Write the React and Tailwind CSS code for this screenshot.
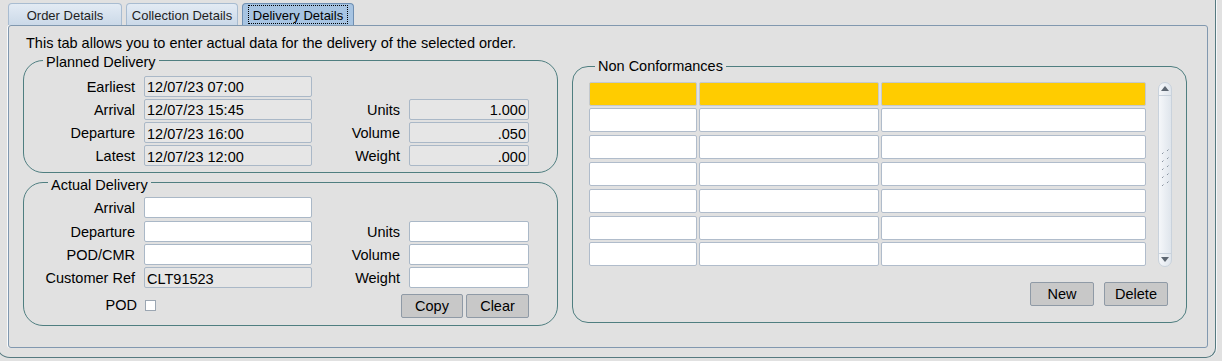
import React from 'react';

/* ── form rows ── */
const plannedLeft = [
  ['Earliest', '12/07/23 07:00'],
  ['Arrival', '12/07/23 15:45'],
  ['Departure', '12/07/23 16:00'],
  ['Latest', '12/07/23 12:00'],
];
const plannedRight = [null, ['Units', '1.000'], ['Volume', '.050'], ['Weight', '.000']];

const actualLeft = [
  ['Arrival', '', false],
  ['Departure', '', false],
  ['POD/CMR', '', false],
  ['Customer Ref', 'CLT91523', true],
];
const actualRight = [null, ['Units', ''], ['Volume', ''], ['Weight', '']];

function Field({ value = '', grey, right, w }) {
  return (
    <input
      readOnly
      value={value}
      className={`h-[21px] ${w} rounded-[2px] border border-[#aab8c7] px-[2px] pt-[2px] text-[14.5px] leading-[17px] text-black outline-none ${grey ? 'bg-[#e6e6e6]' : 'bg-white'} ${right ? 'text-right' : 'text-left'}`}
    />
  );
}

function Row({ left, right, greyRight }) {
  return (
    <div className="flex items-start h-[21px]">
      <span className="w-[111px] mr-[9px] text-right text-[14.5px] leading-[23px] whitespace-nowrap">{left[0]}</span>
      <Field value={left[1]} grey={left[2]} w="w-[168px]" />
      {right ? (
        <>
          <span className="w-[88px] mr-[9px] text-right text-[14.5px] leading-[23px]">{right[0]}</span>
          <Field value={right[1]} grey={greyRight} right w="w-[120px]" />
        </>
      ) : null}
    </div>
  );
}

function Btn({ children, w }) {
  return (
    <button className={`${w} h-[24px] rounded-[2px] border border-[#8f9aa6] bg-[#c8c8c8] text-[14.5px] leading-[22px] text-black`}>
      {children}
    </button>
  );
}

function ScrollBar() {
  return (
    <div className="ml-[12px] w-[14px] h-[185px] flex flex-col rounded-[7px] border border-[#c9d2dc] bg-linear-to-r from-[#f5f7fa] to-[#dfe5ec]">
      <div className="h-[13px] shrink-0 flex items-center justify-center border-b border-[#c9d2dc]">
        <svg width="8" height="5" viewBox="0 0 8 5"><path d="M0 5 L4 0 L8 5Z" fill="#5d6671" /></svg>
      </div>
      <div className="flex-1 flex items-center justify-center pb-[12px]">
        <svg width="9" height="40" viewBox="0 0 9 40">
          {[0, 8, 16, 24, 32].map((y) => (
            <g key={y} stroke="#8b95a1" strokeWidth="1">
              <path d={`M1 ${y + 6} L2.5 ${y + 4.5}`} />
              <path d={`M6 ${y + 3} L7.5 ${y + 1.5}`} />
            </g>
          ))}
        </svg>
      </div>
      <div className="h-[13px] shrink-0 flex items-center justify-center border-t border-[#c9d2dc]">
        <svg width="8" height="5" viewBox="0 0 8 5"><path d="M0 0 L4 5 L8 0Z" fill="#5d6671" /></svg>
      </div>
    </div>
  );
}

export default function App() {
  const cols = ['w-[108px]', 'w-[180px]', 'w-[265px]'];
  return (
    <div className="w-[1222px] h-[361px] overflow-hidden bg-[#e1e1e1] text-black font-['Liberation_Sans',Arial,sans-serif]">
      {/* outer frame */}
      <div className="-ml-[4px] w-[1220px] h-[358px] border-l border-r border-b border-[#567a80] rounded-bl-[14px] rounded-br-[10px] pl-[11px] pt-[3px] shadow-[1px_0_0_#f6f8fa]">
        {/* tabs */}
        <div className="flex gap-[4px] h-[22px]">
          <div className="w-[114px] rounded-t-[4px] border border-b-0 border-[#a8bcd1] bg-linear-to-b from-[#e3ebf4] to-[#cbd9e8] pt-[1.5px] text-[13px] leading-[20px] text-center text-[#1e1e1e]">
            Order Details
          </div>
          <div className="w-[112px] rounded-t-[4px] border border-b-0 border-[#a8bcd1] bg-linear-to-b from-[#e3ebf4] to-[#cbd9e8] pt-[1.5px] text-[13px] leading-[20px] text-center text-[#1e1e1e]">
            Collection Details
          </div>
          <div className="w-[112px] rounded-t-[4px] border border-b-0 border-[#6f8fb2] bg-[#a7c4e2] px-[5px] pt-[1px]">
            <div className="h-[19px] border border-dotted border-black pt-[1px] text-[13px] leading-[17px] text-center">
              Delivery Details
            </div>
          </div>
        </div>

        {/* tab panel */}
        <div className="w-[1200px] h-[323px] rounded-[3px] border border-[#8198af] shadow-[-1px_0_0_#fafbfc] pt-[8px]">
          <div className="pl-[17px] h-[18px] text-[14.5px] leading-[18px]">
            This tab allows you to enter actual data for the delivery of the selected order.
          </div>

          <div className="-mt-[2px] flex items-start gap-[14px] pl-[14px]">
            {/* left column */}
            <div className="w-[535px] flex flex-col">
              <fieldset className="rounded-[20px] border border-[#4f7e80] pb-[6px]">
                <legend className="ml-[19px] px-[3px] pt-[4px] text-[14.5px] leading-[17px]">Planned Delivery</legend>
                <div className="pt-[4.5px] flex flex-col gap-[2.33px]">
                  {plannedLeft.map((l, i) => (
                    <Row key={l[0]} left={[l[0], l[1], true]} right={plannedRight[i]} greyRight />
                  ))}
                </div>
              </fieldset>

              <fieldset className="-mt-[1.5px] rounded-[20px] border border-[#4f7e80] pb-[7.5px]">
                <legend className="ml-[24px] px-[3px] pt-[5px] text-[14.5px] leading-[17px]">Actual Delivery</legend>
                <div className="pt-[3.5px] flex flex-col gap-[2.33px]">
                  {actualLeft.map((l, i) => (
                    <Row key={l[0]} left={l} right={actualRight[i]} />
                  ))}
                </div>
                <div className="mt-[5.5px] flex items-center h-[24px]">
                  <span className="w-[113px] mr-[8px] text-right text-[14.5px] leading-[21px]">POD</span>
                  <span className="w-[11px] h-[11px] border border-[#9ba6b2] bg-white" />
                  <div className="ml-[245px] flex gap-[3px]">
                    <Btn w="w-[62px]">Copy</Btn>
                    <Btn w="w-[63px]">Clear</Btn>
                  </div>
                </div>
              </fieldset>
            </div>

            {/* right column */}
            <fieldset className="mt-[8px] w-[615px] rounded-[16px] border border-[#4f7e80] pl-[16px] pb-[16.5px]">
              <legend className="ml-[6px] px-[3px] text-[14.5px] leading-[17px]">Non Conformances</legend>
              <div className="pt-[6.5px] flex">
                <div className="flex flex-col gap-[2.83px]">
                  {[0, 1, 2, 3, 4, 5, 6].map((r) => (
                    <div key={r} className="flex gap-[2px]">
                      {cols.map((c) => (
                        <div
                          key={c}
                          className={`${c} h-[24px] rounded-[2px] border ${r === 0 ? 'border-[#c4c9cf] bg-[#ffcc00]' : 'border-[#b0bccb] bg-white'}`}
                        />
                      ))}
                    </div>
                  ))}
                </div>
                <ScrollBar />
              </div>
              <div className="mt-[15px] flex justify-end gap-[10px] pr-[18px]">
                <Btn w="w-[64px]">New</Btn>
                <Btn w="w-[64px]">Delete</Btn>
              </div>
            </fieldset>
          </div>
        </div>
      </div>
    </div>
  );
}
